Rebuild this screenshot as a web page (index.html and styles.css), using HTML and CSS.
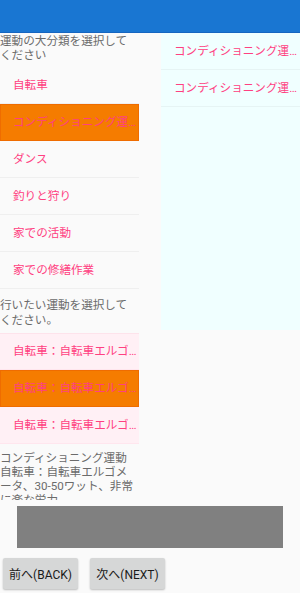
FILE: index.html
```html
<!DOCTYPE html>
<html lang="ja">
<head>
<meta charset="utf-8">
<link rel="stylesheet" href="styles.css">
</head>
<body>
<div class="appbar"></div>
<div class="content">
  <div class="left">
    <div class="title t1">運動の大分類を選択してください</div>
    <div class="list">
      <div class="item">自転車</div>
      <div class="item sel">コンディショニング運動</div>
      <div class="item">ダンス</div>
      <div class="item">釣りと狩り</div>
      <div class="item">家での活動</div>
      <div class="item">家での修繕作業</div>
    </div>
    <div class="title t2">行いたい運動を選択してください。</div>
    <div class="list pink">
      <div class="item">自転車：自転車エルゴメータ、30-50ワット</div>
      <div class="item sel">自転車：自転車エルゴメータ、30-50ワット</div>
      <div class="item">自転車：自転車エルゴメータ、30-50ワット</div>
    </div>
    <div class="desc">コンディショニング運動 自転車：自転車エルゴメータ、30-50ワット、非常に楽な労力</div>
  </div>
  <div class="right">
    <div class="ritem">コンディショニング運動</div>
    <div class="ritem">コンディショニング運動</div>
  </div>
</div>
<div class="graybox"></div>
<div class="buttons">
  <button class="btn">前へ(BACK)</button>
  <button class="btn">次へ(NEXT)</button>
</div>
</body>
</html>
```
FILE: styles.css
```css
* { box-sizing: border-box; }
html, body { margin: 0; padding: 0; }
body {
  width: 300px;
  height: 593px;
  background: #fafafa;
  font-family: Roboto, "Noto Sans CJK JP", sans-serif;
  font-size: 11.6px;
  overflow: hidden;
}
.appbar {
  height: 33px;
  background: #1976d2;
  border-bottom: 1px solid #1565c0;
}
.content {
  display: flex;
  align-items: flex-start;
  height: 467px;
}
.left {
  width: 139px;
  flex: none;
}
.title {
  color: #6b6b6b;
  line-height: 14px;
  padding-right: 3px;
}
.t1 { height: 34px; padding-top: 1px; }
.t2 { height: 44px; padding-top: 9px; line-height: 15px; }
.list .item {
  height: 37px;
  line-height: 36px;
  padding: 0 0 0 13px;
  color: #ff4081;
  white-space: nowrap;
  overflow: hidden;
  text-overflow: ellipsis;
  border-bottom: 1px solid #efefef;
}
.list .item.sel {
  background: #f57c00;
  border-bottom: none;
  box-shadow: inset 0 0 0 1px #ef6c00;
  line-height: 37px;
}
.pink .item {
  background: #fff0f5;
  border-bottom: 1px solid #ffe6ee;
}
.pink .item:first-child { border-top: 1px solid #fde3eb; line-height: 35px; }
.desc {
  height: 56px;
  padding-top: 7px;
  padding-right: 3px;
  color: #6b6b6b;
  line-height: 14px;
  overflow: hidden;
}
.right {
  margin-left: 22px;
  width: 139px;
  height: 297px;
  background: #f0ffff;
}
.ritem {
  height: 37px;
  line-height: 36px;
  padding-left: 13px;
  color: #ff4081;
  white-space: nowrap;
  overflow: hidden;
  text-overflow: ellipsis;
  border-bottom: 1px solid #e6f4f4;
}
.graybox {
  margin: 6px 17px 0 17px;
  height: 42px;
  background: #808080;
}
.buttons {
  display: flex;
  gap: 12px;
  padding: 10px 0 0 3px;
}
.btn {
  width: 75px;
  height: 31px;
  border: none;
  border-radius: 2px;
  background: #d6d7d7;
  box-shadow: 0 1px 2px rgba(0,0,0,0.25);
  font-family: Roboto, "Noto Sans CJK JP", sans-serif;
  font-size: 12px;
  color: #1a1a1a;
  padding: 0;
}
```
